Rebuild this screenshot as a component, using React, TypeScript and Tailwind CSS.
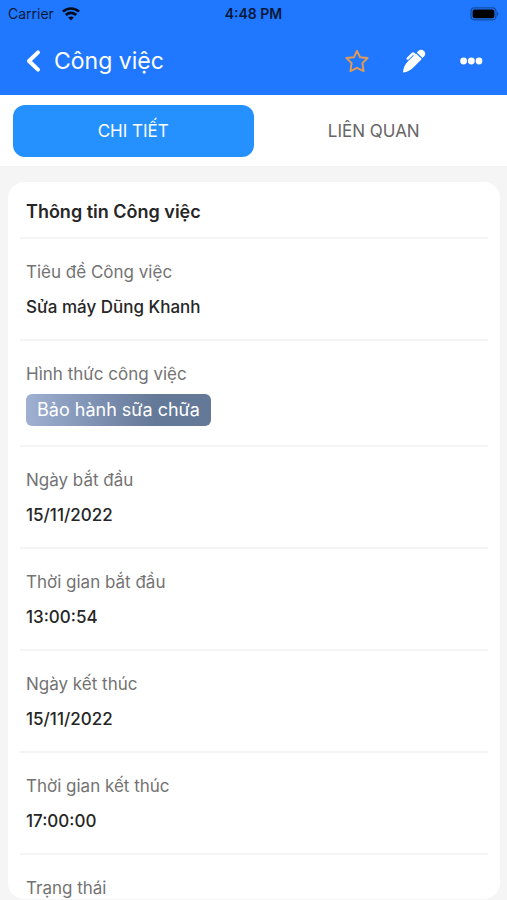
import { useState } from "react";

type Field = { label: string; value?: string; tag?: boolean };

const fields: Field[] = [
  { label: "Tiêu đề Công việc", value: "Sửa máy Dũng Khanh" },
  { label: "Hình thức công việc", value: "Bảo hành sữa chữa", tag: true },
  { label: "Ngày bắt đầu", value: "15/11/2022" },
  { label: "Thời gian bắt đầu", value: "13:00:54" },
  { label: "Ngày kết thúc", value: "15/11/2022" },
  { label: "Thời gian kết thúc", value: "17:00:00" },
  { label: "Trạng thái" },
];

function StatusBar() {
  return (
    <div className="grid h-7 grid-cols-3 items-center px-2 text-sm text-[#06183a]">
      <div className="flex items-center gap-2">
        <span>Carrier</span>
        <svg className="h-[14px] w-[18px]" viewBox="0 0 18 14" fill="none" stroke="#000a1c" strokeWidth="2.6" aria-hidden="true">
          <path d="M0.9 4.6C5.4 0.4 12.6 0.4 17.1 4.6" />
          <path d="M3.8 8C6.7 5.2 11.3 5.2 14.2 8" />
          <path d="M9 13.4 6.100 10.500C7.700 9 10.300 9 11.900 10.500Z" fill="#000a1c" stroke="none" />
        </svg>
      </div>
      <span className="text-center font-semibold">4:48 PM</span>
      <svg className="h-[14px] w-[30px] justify-self-end" viewBox="0 0 30 14" aria-hidden="true">
        <rect x="2" y="0.8" width="25" height="12" rx="3.5" fill="none" stroke="#134ca5" strokeWidth="1.2" />
        <rect x="3.6" y="2.4" width="21.8" height="8.8" rx="2" fill="#000" />
        <path d="M28 5C29.800 5.600 29.800 8.400 28 9Z" fill="#134ca5" />
      </svg>
    </div>
  );
}

function Header() {
  return (
    <header className="h-[95px] shrink-0 bg-[#1f78ff]">
      <StatusBar />
      <div className="flex h-[66px] items-center justify-between px-6">
        <div className="flex items-center gap-3">
          <button type="button" aria-label="Quay lại" className="flex w-[18px] justify-center">
            <svg className="h-6 w-[18px]" viewBox="0 0 18 24" fill="none" stroke="#fff" strokeWidth="4" strokeLinecap="round" strokeLinejoin="round" aria-hidden="true">
              <path d="M14 3.400 5 12l9 8.600" />
            </svg>
          </button>
          <h1 className="text-[23px] leading-8 text-white">Công việc</h1>
        </div>
        <div className="flex items-center gap-[33px]">
          <button type="button" aria-label="Đánh dấu">
            <svg className="h-6 w-6" viewBox="0 0 24 24" fill="none" stroke="#e39a52" strokeWidth="1.9" strokeLinejoin="round" aria-hidden="true">
              <path d="M12 1.800 15 8.200 22.600 9 17.400 14.200 18.600 22.200 12 18.800 5.400 22.200 6.600 14.200 1.400 9 9 8.200Z" />
            </svg>
          </button>
          <button type="button" aria-label="Chỉnh sửa">
            <svg className="h-6 w-6" viewBox="0 0 24 24" fill="#fff" aria-hidden="true">
              <path d="M16.300 2.100C18 .400 20.300 .400 22 2c1.700 1.600 1.700 3.800 0 5.500l-1.500 1.500-5.700-5.400Z" />
              <path d="M13.900 4.500 19.800 10.100 11.600 18.200C8.800 21 5.400 23.100 1 23.500 1.200 19.200 3 15.600 5.600 12.800L11.800 6.600 11.100 5.900 6.600 10.400C5.400 11.500 3.700 9.900 4.800 8.700L9.800 3.700C10.700 2.900 11.700 3 12.500 3.700L13.400 4.900Z" />
            </svg>
          </button>
          <button type="button" aria-label="Thêm">
            <svg className="h-6 w-6" viewBox="0 0 24 24" fill="#fff" aria-hidden="true">
              <circle cx="4.600" cy="12" r="3.400" />
              <circle cx="12.300" cy="12" r="3.400" />
              <circle cx="20" cy="12" r="3.400" />
            </svg>
          </button>
        </div>
      </div>
    </header>
  );
}

function FieldRow({ label, value, tag }: Field) {
  return (
    <div className="border-b-2 border-[#f4f4f4] px-[6px] pt-[23px] last:border-b-0">
      <dt className="text-[17px] leading-5 text-[#737373]">{label}</dt>
      {tag && (
        <dd className="flex pt-[10px] pb-[19px]">
          <span className="rounded-md bg-linear-to-r from-[#9fb0d2] to-[#647898] to-70% px-[11px] text-lg leading-8 text-white">
            {value}
          </span>
        </dd>
      )}
      {value && !tag && (
        <dd className="pt-[13px] pb-5 text-[17px] leading-6 font-medium text-[#262626]">{value}</dd>
      )}
    </div>
  );
}

export default function App() {
  const [tab, setTab] = useState(0);
  return (
    <div className="flex h-screen flex-col bg-[#f5f5f5] font-['Inter','Liberation_Sans',sans-serif]">
      <Header />
      <nav className="grid shrink-0 grid-cols-2 bg-white px-[13px] pt-[10px] pb-[9px]">
        {["CHI TIẾT", "LIÊN QUAN"].map((name, i) => (
          <button
            key={name}
            type="button"
            aria-pressed={tab === i}
            onClick={() => setTab(i)}
            className={`h-[52px] rounded-xl pt-[2px] text-[17px] ${tab === i ? "bg-[#2491ff] text-white" : "text-[#666666]"}`}
          >
            {name}
          </button>
        ))}
      </nav>
      <main className="mt-4 mr-[7px] mb-px ml-2 min-h-0 flex-1 overflow-y-auto rounded-2xl bg-white px-3 [scrollbar-width:none]">
        <h2 className="border-b-2 border-[#f4f4f4] px-[6px] pt-[18px] pb-[13px] text-lg leading-6 font-semibold text-[#262626]">
          Thông tin Công việc
        </h2>
        <dl>
          {fields.map((field) => (
            <FieldRow key={field.label} {...field} />
          ))}
        </dl>
      </main>
    </div>
  );
}
